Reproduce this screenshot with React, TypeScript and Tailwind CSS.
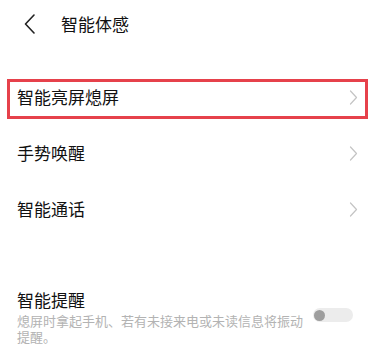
import React from "react";

const Chevron = () => (
  <svg width="9" height="15" viewBox="0 0 9 15" fill="none">
    <path d="M1.5 1 L7.5 7.5 L1.5 14" stroke="#c4c4c4" strokeWidth="1.2" strokeLinecap="round" strokeLinejoin="round" />
  </svg>
);

const Row = ({ label, highlight }: { label: string; highlight?: boolean }) => (
  <div className="relative flex h-[56px] items-center justify-between pl-[17px] pr-[18px]">
    <span className="text-[17px] leading-[20px] text-[#111]">{label}</span>
    <Chevron />
    {highlight && (
      <div className="pointer-events-none absolute left-[7px] top-[10px] h-[40px] w-[361px] border-[3px] border-[#e6414b]" />
    )}
  </div>
);

export default function App() {
  return (
    <div
      className="h-[357px] w-[376px] overflow-hidden bg-white"
      style={{ fontFamily: '"Noto Sans CJK SC", "Noto Sans", sans-serif' }}
    >
      <div className="flex h-[48px] items-center pl-[24px]">
        <svg width="11" height="20" viewBox="0 0 11 20" fill="none">
          <path d="M10 1 L1.5 10 L10 19" stroke="#222" strokeWidth="1.6" strokeLinecap="round" strokeLinejoin="round" />
        </svg>
        <span className="ml-[26px] text-[17px] leading-[20px] text-[#111]">智能体感</span>
      </div>
      <div className="h-[21px]" />
      <Row label="智能亮屏熄屏" highlight />
      <Row label="手势唤醒" />
      <Row label="智能通话" />
      <div className="mt-[53px] flex items-start pl-[17px]">
        <div className="w-[290px]">
          <div className="text-[17px] leading-[20px] text-[#111]">智能提醒</div>
          <div className="mt-[3px] text-[13px] leading-[16px] text-[#b3b3b3]">
            熄屏时拿起手机、若有未接来电或未读信息将振动提醒。
          </div>
        </div>
        <div className="ml-[6px] mt-[18px] flex h-[14px] w-[40px] items-center rounded-full bg-[#ececec] pl-[1px]">
          <div className="h-[11px] w-[11px] rounded-full bg-[#9e9e9e]" />
        </div>
      </div>
    </div>
  );
}
